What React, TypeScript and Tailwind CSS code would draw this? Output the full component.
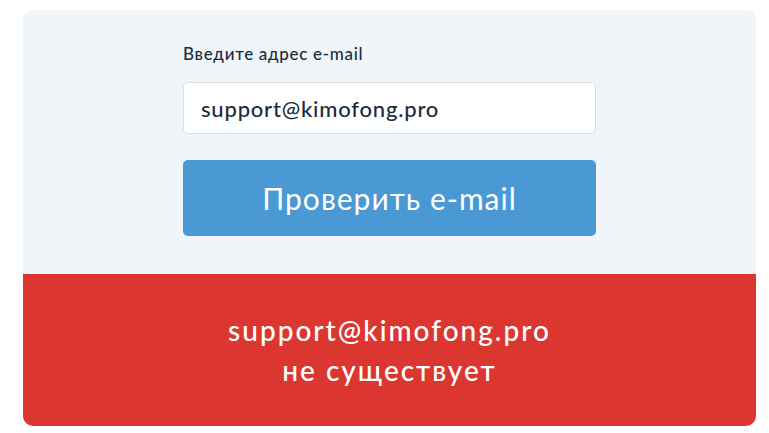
import React from "react";

export default function App() {
  return (
    <div className="min-h-screen bg-white px-[23px] pt-[10px] font-['Lato',sans-serif]">
      <div className="w-[733px] overflow-hidden rounded-[10px]">
        <div className="bg-[#f0f5fa] pt-[33px] pb-[38px]">
          <div className="mx-auto w-[413px]">
            <label className="block text-[17px] font-medium leading-[21px] tracking-[0.7px] text-[#1c2b3a]">
              Введите адрес e-mail
            </label>
            <div className="mt-[18px] flex h-[52px] items-center rounded-[5px] border border-[#d9dee3] bg-white px-[17px] text-[22px] font-medium tracking-[0.8px] text-[#1c2b3a]">
              support@kimofong.pro
            </div>
            <button className="mt-[26px] flex h-[76px] w-full items-center justify-center rounded-[5px] bg-[#4a98d4] text-[30px] font-normal tracking-[1px] text-white">
              Проверить e-mail
            </button>
          </div>
        </div>
        <div className="flex h-[152px] flex-col items-center justify-center bg-[#dc3630] text-[28px] font-medium leading-[40px] tracking-[2px] text-white">
          <span>support@kimofong.pro</span>
          <span>не существует</span>
        </div>
      </div>
    </div>
  );
}
